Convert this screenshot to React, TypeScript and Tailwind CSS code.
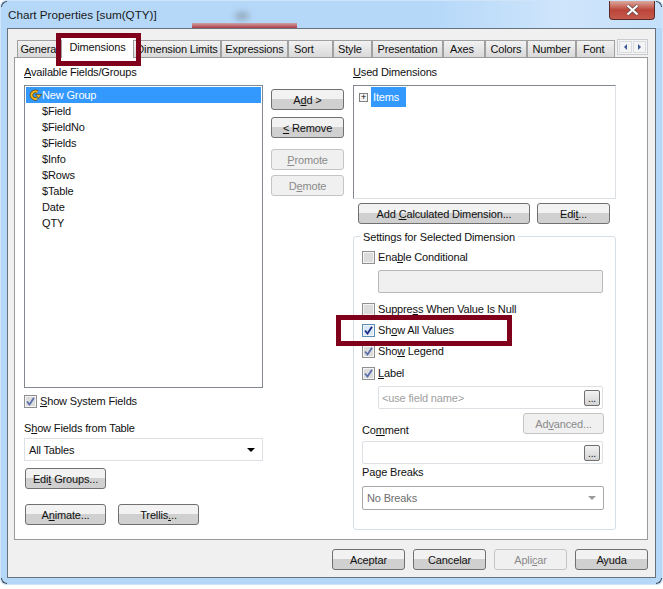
import type { ReactNode } from "react";

const tabs: { label: string; width: string; align: string }[] = [
  { label: "General", width: "w-[45px]", align: "justify-center" },
  { label: "Dimensions", width: "w-[71px]", align: "justify-center" },
  { label: "Dimension Limits", width: "w-[88px]", align: "justify-center" },
  { label: "Expressions", width: "w-[67px]", align: "justify-center" },
  { label: "Sort", width: "w-[45px]", align: "justify-start pl-[5px]" },
  { label: "Style", width: "w-[39px]", align: "justify-start pl-[4px]" },
  { label: "Presentation", width: "w-[71px]", align: "justify-center" },
  { label: "Axes", width: "w-[42px]", align: "justify-start pl-[6px]" },
  { label: "Colors", width: "w-[42px]", align: "justify-center" },
  { label: "Number", width: "w-[49px]", align: "justify-center" },
  { label: "Font", width: "w-[39px]", align: "justify-start pl-[6px]" },
];

const fields = ["$Field", "$FieldNo", "$Fields", "$Info", "$Rows", "$Table", "Date", "QTY"];

function Button({ children, disabled, className = "" }: { children: ReactNode; disabled?: boolean; className?: string }) {
  return (
    <div
      className={`flex h-[21px] shrink-0 items-center justify-center rounded-[3px] border ${
        disabled
          ? "border-[#c4c4c4] bg-[#f0f0f0] text-[#8b8b8b]"
          : "border-[#707070] bg-gradient-to-b from-[#f2f2f2] from-45% to-[#d0d0d0] to-50% text-[#111]"
      } ${className}`}
    >
      <span>{children}</span>
    </div>
  );
}

function Check({
  checked,
  dim,
  focus,
  label,
  className = "",
}: {
  checked?: boolean;
  dim?: boolean;
  focus?: boolean;
  label: ReactNode;
  className?: string;
}) {
  return (
    <div className={`flex h-[13px] items-center ${className}`}>
      <div
        className={`flex h-[13px] w-[13px] shrink-0 items-center justify-center border shadow-[inset_0_0_0_1px_#f4f4f4] ${
          focus ? "border-[#5b8fb8] bg-[#d8e8f6]" : "border-[#8e8f8f] bg-[#dcdcdc]"
        }`}
      >
        {checked && (
          <svg width="9" height="9" viewBox="0 0 9 9">
            <path d="M1 4.5 L3.5 7.5 L8 0.8" fill="none" stroke={dim ? "#5a70ac" : "#1a2b86"} strokeWidth="1.8" />
          </svg>
        )}
      </div>
      <span className="-mt-[2px] ml-[3px] whitespace-nowrap">{label}</span>
    </div>
  );
}

function DotsButton() {
  return (
    <div className="flex h-[16px] w-[16px] items-end justify-center rounded-[2px] border border-[#707070] bg-gradient-to-b from-[#f2f2f2] to-[#d4d4d4] text-[10px] leading-[12px] text-[#111]">
      ...
    </div>
  );
}

function Corner({ className }: { className: string }) {
  return <div className={`absolute h-[6px] w-[6px] border-[#3a4450] ${className}`} />;
}

export default function App() {
  return (
    <div
      className="h-[589px] w-[663px] bg-white text-[11px] leading-[14px] tracking-[-0.15px] text-[#111]"
      style={{ fontFamily: '"Liberation Sans", Arial, sans-serif' }}
    >
      <div className="relative flex h-[585px] w-[663px] flex-col overflow-hidden rounded-[6px] border border-[#cfe4f8] bg-[#b5d8f9]">
        <Corner className="left-0 top-0 rounded-tl-[6px] border-l border-t" />
        <Corner className="right-0 top-0 rounded-tr-[6px] border-r border-t" />
        <Corner className="bottom-0 left-0 rounded-bl-[6px] border-b border-l" />
        <Corner className="bottom-0 right-0 rounded-br-[6px] border-b border-r" />

        {/* title bar */}
        <div className="flex h-[27px] shrink-0 items-start bg-gradient-to-r from-[#b5d8f9] from-65% via-[#cfe5fb] via-85% to-[#c4e0fa] pl-[7px] pt-[7px]">
          <span className="text-[11.7px] tracking-normal text-[#1a1a1a]">Chart Properties [sum(QTY)]</span>
          <div className="ml-auto mr-[7px] -mt-[7px] flex h-[19px] w-[46px] items-center justify-center rounded-b-[4px] border border-t-0 border-[#5a2a28] bg-gradient-to-b from-[#dba79f] via-[#bb4438] to-[#c45a4c]">
            <svg width="15" height="12" viewBox="0 0 15 12">
              <path d="M2.5 1.5 L12.5 10.5 M12.5 1.5 L2.5 10.5" stroke="#5a4a48" strokeWidth="3.6" />
              <path d="M2.5 1.5 L12.5 10.5 M12.5 1.5 L2.5 10.5" stroke="#fff" strokeWidth="2.2" />
            </svg>
          </div>
        </div>
        {/* what shows through the glass title bar */}
        <div className="absolute left-[191px] top-[22px] h-[5px] w-[105px] bg-gradient-to-b from-[#c9a0a8] to-[#b23a44] blur-[0.5px]" />
        <div className="absolute left-[234px] top-[11px] h-[8px] w-[14px] rounded-full bg-[#93a9bd] blur-[3px]" />

        {/* client area */}
        <div className="mx-[6px] flex h-[550px] flex-col border border-[#66737f] bg-[#f0f0f0] px-[6px] pt-[10px]">
          <div className="flex h-[18px] items-end pl-[3px]">
            {tabs.map((t) =>
              t.label === "Dimensions" ? (
                <div key={t.label} className={`z-10 -mb-px flex h-[20px] ${t.width} shrink-0 items-center justify-center bg-white pb-[2px]`}>
                  {t.label}
                </div>
              ) : (
                <div
                  key={t.label}
                  className={`flex h-[17px] ${t.width} ${t.align} shrink-0 items-center overflow-hidden whitespace-nowrap border border-b-0 border-[#a0a0a0] bg-gradient-to-b from-[#f2f2f2] to-[#d9d9d9] pb-px`}
                >
                  {t.label}
                </div>
              )
            )}
            <div className="mb-[2px] ml-[2px] flex h-[16px] w-[31px] shrink-0 gap-px border border-[#c8ccd0] bg-[#f4f4f4] p-px">
              <div className="flex flex-1 items-center justify-center border border-[#d8dce0]">
                <div className="h-0 w-0 border-y-[3px] border-r-[3px] border-y-transparent border-r-[#3a5a9a]" />
              </div>
              <div className="flex flex-1 items-center justify-center border border-[#d8dce0]">
                <div className="h-0 w-0 border-y-[3px] border-l-[3px] border-y-transparent border-l-[#3a5a9a]" />
              </div>
            </div>
          </div>

          {/* page */}
          <div className="flex h-[483px] w-[634px] border border-[#9a9a9a] bg-white pl-[9px] pt-[7px]">
            {/* left column */}
            <div className="flex w-[239px] shrink-0 flex-col">
              <div className="h-[14px]">
                <u>A</u>vailable Fields/Groups
              </div>
              <div className="mt-[6px] h-[303px] border border-[#828790] p-px">
                <div className="flex h-[16px] items-center bg-[#3399ff] text-white">
                  <svg width="13" height="12" viewBox="0 0 13 12" className="ml-[3px]">
                    <path d="M8.5 3 A3.8 3.8 0 1 0 8 9.5" fill="none" stroke="#5a4410" strokeWidth="3.4" />
                    <path d="M8.5 3 A3.8 3.8 0 1 0 8 9.5" fill="none" stroke="#f2b422" strokeWidth="2" />
                    <path d="M6.5 5.5 H12.5 L9.5 9.5 Z" fill="#f2b422" stroke="#5a4410" strokeWidth="0.7" />
                  </svg>
                  New Group
                </div>
                {fields.map((f) => (
                  <div key={f} className="flex h-[16px] items-center pl-[16px]">
                    {f}
                  </div>
                ))}
              </div>
              <Check checked dim className="mt-[7px]" label={<><u>S</u>how System Fields</>} />
              <div className="mt-[13px] h-[14px]">
                S<u>h</u>ow Fields from Table
              </div>
              <div className="mt-[3px] flex h-[23px] items-center justify-between border border-[#dcdfe3] pl-[4px] pr-[7px]">
                All Tables
                <div className="h-0 w-0 border-x-[4px] border-t-[4px] border-x-transparent border-t-black" />
              </div>
              <Button className="ml-px mt-[7px] w-[81px]">
                Edi<u>t</u> Groups...
              </Button>
              <div className="ml-px mt-[15px] flex gap-[12px]">
                <Button className="w-[81px]">
                  A<u>n</u>imate...
                </Button>
                <Button className="w-[81px]">
                  Trellis<u>.</u>..
                </Button>
              </div>
            </div>

            {/* middle column */}
            <div className="ml-[8px] flex w-[73px] shrink-0 flex-col pt-[24px]">
              <Button>
                A<u>d</u>d &gt;
              </Button>
              <Button className="mt-[7px]">
                <u>&lt;</u> Remove
              </Button>
              <Button disabled className="mt-[11px]">
                <u>P</u>romote
              </Button>
              <Button disabled className="mt-[5px]">
                D<u>e</u>mote
              </Button>
            </div>

            {/* right column */}
            <div className="ml-[9px] flex w-[263px] shrink-0 flex-col">
              <div className="h-[14px]">
                <u>U</u>sed Dimensions
              </div>
              <div className="mt-[6px] flex h-[114px] items-start border border-[#828790] border-b-[#dcdfe3] border-r-[#dcdfe3] pl-[5px] pt-px">
                <div className="mt-[6px] flex h-[9px] w-[9px] items-center justify-center border border-[#808080] bg-[#f4f4f4] text-[9px] leading-none text-black">
                  +
                </div>
                <div className="ml-[3px] flex h-[20px] w-[35px] items-center bg-[#3399ff] pl-[2px] text-white">Items</div>
              </div>
              <div className="ml-[5px] mt-[4px] flex gap-[7px]">
                <Button className="w-[172px]">
                  Add <u>C</u>alculated Dimension...
                </Button>
                <Button className="w-[73px]">
                  Edi<u>t</u>...
                </Button>
              </div>

              {/* settings group */}
              <div className="relative mt-[12px] flex h-[294px] flex-col rounded-[3px] border border-[#d5dfe5] px-[8px] pt-[14px]">
                <span className="absolute -top-[7px] left-[6px] bg-white px-[3px]">Settings for Selected Dimension</span>
                <Check label={<>Ena<u>b</u>le Conditional</>} />
                <div className="ml-[16px] mt-[6px] h-[23px] w-[225px] shrink-0 rounded-[2px] border border-[#b8b8b8] bg-[#f0f0f0]" />
                <Check className="mt-[10px]" label={<>Suppre<u>s</u>s When Value Is Null</>} />
                <Check checked focus className="mt-[8px]" label={<>Sh<u>o</u>w All Values</>} />
                <Check checked dim className="mt-[8px]" label={<>Sho<u>w</u> Legend</>} />
                <Check checked dim className="mt-[9px]" label={<><u>L</u>abel</>} />
                <div className="ml-[16px] mt-[6px] flex h-[23px] w-[225px] shrink-0 items-center justify-between rounded-[2px] border border-[#dcdfe3] pl-[3px] pr-[2px] text-[#a0a0a0]">
                  &lt;use field name&gt;
                  <DotsButton />
                </div>
                <div className="relative h-[21px] shrink-0">
                  <Button disabled className="absolute right-[3px] top-[4px] w-[81px]">
                    Ad<u>v</u>anced...
                  </Button>
                  <div className="absolute left-0 top-[14px]">
                    Co<u>m</u>ment
                  </div>
                </div>
                <div className="mt-[11px] flex h-[23px] w-[241px] shrink-0 items-center justify-end rounded-[2px] border border-[#dcdfe3] pr-[2px]">
                  <DotsButton />
                </div>
                <div className="mt-[1px] h-[14px]">
                  Pa<u>g</u>e Breaks
                </div>
                <div className="mt-[7px] flex h-[24px] w-[242px] shrink-0 items-center justify-between rounded-[2px] border border-[#a9a9a9] pl-[4px] pr-[7px] text-[#6d6d6d]">
                  No Breaks
                  <div className="h-0 w-0 border-x-[4px] border-t-[4px] border-x-transparent border-t-[#9a9a9a]" />
                </div>
              </div>
            </div>
          </div>

          {/* dialog buttons */}
          <div className="mt-[9px] flex justify-end gap-[8px] pr-[1px]">
            <Button className="w-[73px]">Aceptar</Button>
            <Button className="w-[73px]">Cancelar</Button>
            <Button disabled className="w-[73px]">
              Apli<u>c</u>ar
            </Button>
            <Button className="w-[73px]">Ayuda</Button>
          </div>
        </div>

        {/* annotation boxes */}
        <div className="pointer-events-none absolute left-[55px] top-[32px] h-[33px] w-[85px] border-[5px] border-[#80001c]" />
        <div className="pointer-events-none absolute left-[335px] top-[314px] h-[31px] w-[176px] border-[5px] border-[#80001c]" />
      </div>
    </div>
  );
}
